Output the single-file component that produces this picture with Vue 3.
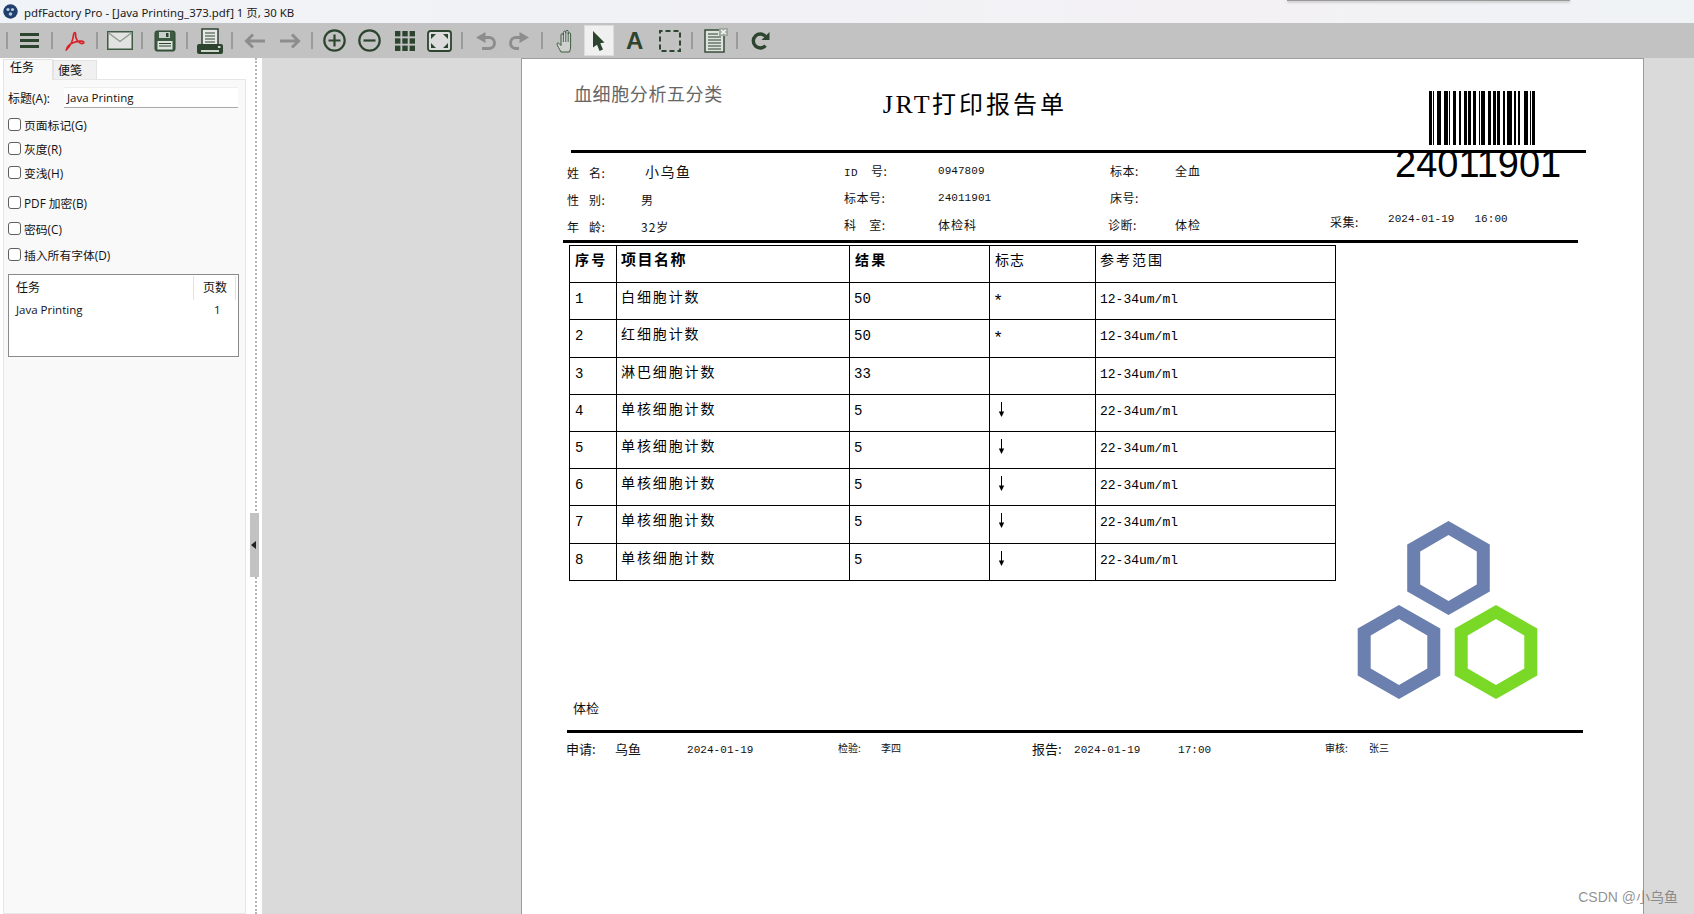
<script setup>
const rows = [
  { no: '1', name: '白细胞计数', val: '50', flag: '*', range: '12-34um/ml' },
  { no: '2', name: '红细胞计数', val: '50', flag: '*', range: '12-34um/ml' },
  { no: '3', name: '淋巴细胞计数', val: '33', flag: '', range: '12-34um/ml' },
  { no: '4', name: '单核细胞计数', val: '5', flag: 'down', range: '22-34um/ml' },
  { no: '5', name: '单核细胞计数', val: '5', flag: 'down', range: '22-34um/ml' },
  { no: '6', name: '单核细胞计数', val: '5', flag: 'down', range: '22-34um/ml' },
  { no: '7', name: '单核细胞计数', val: '5', flag: 'down', range: '22-34um/ml' },
  { no: '8', name: '单核细胞计数', val: '5', flag: 'down', range: '22-34um/ml' }
]
const options = [
  { label: '页面标记(G)', cls: '' },
  { label: '灰度(R)', cls: '' },
  { label: '变浅(H)', cls: '' },
  { label: 'PDF 加密(B)', cls: 'wide' },
  { label: '密码(C)', cls: 'mid' },
  { label: '插入所有字体(D)', cls: 'mid' }
]
const codes = ['211232', '311222', '222122', '221132', '222122', '214121', '2331112']
const module = 106 / 79
const bars = []
let pos = 0
codes.join('').split('').forEach((c, i) => {
  const w = Number(c) * module
  if (i % 2 === 0) bars.push({ x: pos, w })
  pos += w
})
const hex = (cx, cy) => {
  const p = (hw, hh) => {
    const q = hh / 2
    return `M${cx} ${cy - hh}L${cx + hw} ${cy - q}V${cy + q}L${cx} ${cy + hh}L${cx - hw} ${cy + q}V${cy - q}Z`
  }
  return p(41.3, 47) + p(28.3, 33)
}
const hexBlue = hex(41.5, 47) + hex(-8 + 0, 131)
</script>

<template>
  <div class="app">
    <header class="titlebar">
      <svg class="appicon" width="15" height="15" viewBox="0 0 15 15">
        <circle cx="7.5" cy="7.5" r="7.2" fill="#1f3f6e" />
        <circle cx="5" cy="5.5" r="1.6" fill="#b9c9de" />
        <circle cx="9.5" cy="5.5" r="1.6" fill="#b9c9de" />
        <circle cx="7.5" cy="10" r="1.8" fill="#b9c9de" />
      </svg>
      <span class="title-text">pdfFactory Pro - [Java Printing_373.pdf] 1 页, 30 KB</span>
      <div class="popup-edge"></div>
    </header>

    <nav class="toolbar">
      <i class="sep ml6"></i>
      <svg class="ml12" width="19" height="15" viewBox="0 0 19 15" fill="#2d452f"><rect width="19" height="3" /><rect y="6" width="19" height="3" /><rect y="12" width="19" height="3" /></svg>
      <i class="sep ml12"></i>
      <svg class="ml12" width="20" height="20" viewBox="0 0 20 20" fill="none" stroke="#d8222a" stroke-width="1.7"><path d="M1.5 18.5C5 15.5 8 9 8.6 3.5 8.9.8 10.8.8 10.6 3.5 10.3 7.5 13 11 15.5 12.2 17.5 13.1 19.2 12 18.6 10.8 18 9.6 13 9.8 8 11.8 5 13.2 2 15.5 1.5 18.5Z" /></svg>
      <i class="sep ml11"></i>
      <svg class="ml9" width="26" height="19" viewBox="0 0 26 19"><rect x=".75" y=".75" width="24.5" height="17.5" fill="#e2e2e2" stroke="#3f5a42" stroke-width="1.5" /><path d="M1 1.5L13 10.5 25 1.5" fill="none" stroke="#8a9a8b" stroke-width="1.3" /></svg>
      <i class="sep ml8"></i>
      <svg class="ml11" width="22" height="22" viewBox="0 0 22 22"><rect x="1" y="1" width="20" height="20" rx="2" fill="#3b5a3f" stroke="#2d452f" /><rect x="5" y="2" width="11" height="6" fill="#c9cfc9" /><rect x="12" y="3" width="2.5" height="4" fill="#2d452f" /><rect x="3.5" y="11" width="15" height="8.5" fill="#dfe3df" /><path d="M5 13.5H17M5 16H17" stroke="#2d452f" stroke-width="1" /></svg>
      <i class="sep ml10"></i>
      <svg class="ml9" width="26" height="26" viewBox="0 0 26 26"><rect x="5" y="1" width="16" height="17" fill="#e8e8e8" stroke="#2d452f" stroke-width="1.5" /><path d="M8 5H18M8 8H18M8 11H18M8 14H18" stroke="#2d452f" stroke-width="1.2" /><rect y="16" width="26" height="10" rx="2" fill="#2d452f" /><rect x="4" y="22" width="18" height="2" fill="#cfd4cf" /><rect x="21" y="18" width="2.5" height="2" fill="#cfd4cf" /></svg>
      <i class="sep ml8"></i>
      <svg class="ml11" width="22" height="16" viewBox="0 0 22 16" fill="none" stroke="#8d8d8d" stroke-width="3"><path d="M21 8H3M9 1.5L2.5 8 9 14.5" /></svg>
      <svg class="ml13" width="22" height="16" viewBox="0 0 22 16" fill="none" stroke="#8d8d8d" stroke-width="3"><path d="M1 8H19M13 1.5L19.5 8 13 14.5" /></svg>
      <i class="sep ml10"></i>
      <svg class="ml10" width="23" height="23" viewBox="0 0 23 23" fill="none" stroke="#2d452f" stroke-width="2.2"><circle cx="11.5" cy="11.5" r="10.2" /><path d="M5.5 11.5H17.5M11.5 5.5V17.5" /></svg>
      <svg class="ml12" width="23" height="23" viewBox="0 0 23 23" fill="none" stroke="#2d452f" stroke-width="2.2"><circle cx="11.5" cy="11.5" r="10.2" /><path d="M5.5 11.5H17.5" /></svg>
      <svg class="ml14" width="20" height="20" viewBox="0 0 20 20" fill="#2d452f"><rect width="5.4" height="5.4" /><rect x="7.3" width="5.4" height="5.4" /><rect x="14.6" width="5.4" height="5.4" /><rect y="7.3" width="5.4" height="5.4" /><rect x="7.3" y="7.3" width="5.4" height="5.4" /><rect x="14.6" y="7.3" width="5.4" height="5.4" /><rect y="14.6" width="5.4" height="5.4" /><rect x="7.3" y="14.6" width="5.4" height="5.4" /><rect x="14.6" y="14.6" width="5.4" height="5.4" /></svg>
      <svg class="ml12" width="25" height="22" viewBox="0 0 25 22"><rect x="1" y="1" width="23" height="20" rx="2.5" fill="#dcdcdc" stroke="#2d452f" stroke-width="1.8" /><path d="M4 4H9L4 9ZM21 4V9L16 4ZM4 18V13L9 18ZM21 18H16L21 13Z" fill="#2d452f" /></svg>
      <i class="sep ml9"></i>
      <svg class="ml13" width="20" height="18" viewBox="0 0 20 18" fill="none" stroke="#8d8d8d" stroke-width="3"><path d="M9 5.5H13A5 5 0 0 1 13 16.5H6" /><path d="M0 5.5L9.5 0V11Z" fill="#8d8d8d" stroke="none" /></svg>
      <svg class="ml13" width="20" height="18" viewBox="0 0 20 18" fill="none" stroke="#8d8d8d" stroke-width="3"><path d="M11 5.5H7A5 5 0 0 0 7 16.5H10" /><path d="M20 5.5L10.5 0V11Z" fill="#8d8d8d" stroke="none" /></svg>
      <i class="sep ml12"></i>
      <svg class="ml13" width="18" height="24" viewBox="0 0 18 24"><path d="M5 23C3.5 20 1 16.5 1 15 1 14 2.2 13.6 3 14.4L5 16.5V6A1.2 1.2 0 0 1 7.4 6V3.5A1.2 1.2 0 0 1 9.8 3.5V2.5A1.2 1.2 0 0 1 12.2 2.5V5A1.2 1.2 0 0 1 14.6 5V17C14.6 20 14 21.5 13.5 23Z" fill="#cfd1cf" stroke="#3f5a42" stroke-width="1" /><path d="M7.4 5V13M9.8 3V13M12.2 4V13" stroke="#3f5a42" stroke-width=".9" fill="none" /></svg>
      <div class="cursor-btn ml10">
        <svg width="12" height="20" viewBox="0 0 12 20" fill="#2d452f"><path d="M0 0L11.5 11.5 7.3 12.3 10 18.6 6.6 20 4 13.7 0 16.5Z" /></svg>
      </div>
      <span class="a-tool ml12">A</span>
      <svg class="ml16" width="22" height="22" viewBox="0 0 22 22" fill="none" stroke="#2d452f" stroke-width="2"><rect x="1" y="1" width="20" height="20" stroke-dasharray="5 3" stroke-dashoffset="2.5" /></svg>
      <i class="sep ml10"></i>
      <svg class="ml11" width="24" height="25" viewBox="0 0 24 25"><rect x="1" y="2" width="19" height="22" fill="#dfe2df" stroke="#2d452f" stroke-width="1.4" /><path d="M4 6H14M4 9H17M4 12H17M4 15H17M4 18H17M4 21H17" stroke="#2d452f" stroke-width="1.2" /><rect x="15" y="0" width="9" height="8" fill="#9fa89f" /><path d="M17.2 1.8L21.8 6.2M21.8 1.8L17.2 6.2" stroke="#f2f2f2" stroke-width="1.6" /></svg>
      <i class="sep ml8"></i>
      <svg class="ml12" width="20" height="18" viewBox="0 0 20 18" fill="none" stroke="#2d452f" stroke-width="3.4"><path d="M15.5 4.3A7 7 0 1 0 15.5 13.7" /><path d="M19.5 0V8H11.5Z" fill="#2d452f" stroke="none" /></svg>
    </nav>

    <div class="workspace">
      <aside class="side">
        <div class="panel">
          <div class="tabs">
            <span class="tab active">任务</span>
            <span class="tab">便笺</span>
          </div>
          <div class="tabbody">
            <div class="field">
              <label class="field-label">标题(A):</label>
              <span class="input">Java Printing</span>
            </div>
            <div class="options">
              <label v-for="o in options" :key="o.label" class="opt" :class="o.cls">
                <i class="check"></i><span>{{ o.label }}</span>
              </label>
            </div>
            <div class="list">
              <div class="list-head">
                <span class="c-task">任务</span>
                <span class="c-pages">页数</span>
              </div>
              <div class="list-row">
                <span class="c-task row-task">Java Printing</span>
                <span class="c-pages row-pages">1</span>
              </div>
            </div>
          </div>
        </div>
        <div class="splitter">
          <i class="dots"></i>
          <div class="handle"><i class="handle-arrow"></i></div>
        </div>
      </aside>

      <main class="viewer">
        <article class="page">
          <div class="head">
            <span class="sub">血细胞分析五分类</span>
            <span class="doc-title"><b class="jrt">JRT</b>打印报告单</span>
          </div>
          <div class="rule r1"></div>

          <div class="barcode">
            <svg width="106" height="54" viewBox="0 0 106 54" shape-rendering="crispEdges">
              <rect v-for="(b, i) in bars" :key="i" :x="b.x" y="0" :width="b.w" height="54" fill="#000" />
            </svg>
          </div>
          <div class="barcode-num">24011901</div>

          <div class="info">
            <span class="low lab">姓&nbsp;&nbsp;&nbsp;名:</span><span class="big">小乌鱼</span>
            <span class="lab"><span class="id">ID</span>&nbsp;&nbsp;&nbsp;&nbsp;号:</span><span class="mono">0947809</span>
            <span class="lab c3">标本:</span><span class="val">全血</span>
            <span></span><span></span>

            <span class="low lab">性&nbsp;&nbsp;&nbsp;别:</span><span class="low val">男</span>
            <span class="lab">标本号:</span><span class="mono">24011901</span>
            <span class="lab c3">床号:</span><span></span>
            <span></span><span></span>

            <span class="low lab">年&nbsp;&nbsp;&nbsp;龄:</span><span class="low val">32岁</span>
            <span class="lab">科&nbsp;&nbsp;&nbsp;&nbsp;室:</span><span class="val">体检科</span>
            <span class="lab">诊断:</span><span class="val">体检</span>
            <span class="lab stamp-lab">采集:</span><span class="mono stamp">2024-01-19&nbsp;&nbsp;&nbsp;16:00</span>
          </div>
          <div class="rule r2"></div>

          <table class="report">
            <colgroup>
              <col class="w1" /><col class="w2" /><col class="w3" /><col class="w4" /><col class="w5" />
            </colgroup>
            <thead>
              <tr>
                <th>序号</th><th class="wide-th">项目名称</th><th>结果</th><th class="thin">标志</th><th class="thin ref">参考范围</th>
              </tr>
            </thead>
            <tbody>
              <tr v-for="r in rows" :key="r.no">
                <td class="num">{{ r.no }}</td>
                <td class="name">{{ r.name }}</td>
                <td class="num val-cell">{{ r.val }}</td>
                <td class="flag">
                  <svg v-if="r.flag === 'down'" class="down" width="7" height="15" viewBox="0 0 7 15"><path d="M3.5 0V10" stroke="#000" stroke-width="1" /><path d="M.8 9.5H6.2L3.5 15Z" fill="#000" /></svg>
                  <span v-else class="star">{{ r.flag }}</span>
                </td>
                <td class="range">{{ r.range }}</td>
              </tr>
            </tbody>
          </table>

          <div class="note">体检</div>
          <div class="rule r3"></div>

          <div class="foot">
            <span>申请:</span><span class="big-foot">乌鱼</span><span class="mono lower">2024-01-19</span>
            <span class="tiny">检验:</span><span class="tiny">李四</span>
            <span>报告:</span><span class="mono lower">2024-01-19</span><span class="mono lower">17:00</span>
            <span class="tiny">审核:</span><span class="tiny">张三</span>
          </div>

          <svg class="logo" width="190" height="190" viewBox="-50 0 190 190">
            <path :d="hexBlue" fill="#6b80ae" fill-rule="evenodd" />
            <path :d="hex(89, 131)" fill="#7ad826" fill-rule="evenodd" />
          </svg>
        </article>
      </main>
    </div>

    <div class="watermark">CSDN @小乌鱼</div>
  </div>
</template>

<style>
html, body { margin: 0; overflow: hidden; }
</style>

<style scoped>
.app {
  width: 1694px;
  height: 914px;
  display: flex;
  flex-direction: column;
  overflow: hidden;
  position: relative;
  font-family: "Open Sans", "Noto Sans CJK SC", sans-serif;
  color: #111;
}
.titlebar {
  height: 23px;
  flex: none;
  display: flex;
  align-items: center;
  padding-left: 3px;
  box-sizing: border-box;
  background: linear-gradient(90deg, #f0f3f7, #f3f1f4 75%, #eff3f6);
  position: relative;
}
.appicon { flex: none; }
.title-text { margin-left: 6px; font-size: 11.4px; color: #1a1a1a; white-space: nowrap; font-family: "Noto Sans", "Noto Sans CJK SC", sans-serif; }
.popup-edge {
  position: absolute;
  left: 1287px;
  top: 0;
  width: 283px;
  height: 1px;
  background: #9a9a9a;
  box-shadow: 0 1px 3px rgba(0, 0, 0, .4);
}

.toolbar {
  height: 35px;
  flex: none;
  background: #c2c2c2;
  display: flex;
  align-items: center;
}
.toolbar svg { flex: none; display: block; }
.sep { width: 2px; height: 17px; background: #9b9b9b; flex: none; }
.ml6 { margin-left: 6px; }
.ml8 { margin-left: 8px; }
.ml9 { margin-left: 9px; }
.ml10 { margin-left: 10px; }
.ml11 { margin-left: 11px; }
.ml12 { margin-left: 12px; }
.ml13 { margin-left: 13px; }
.ml14 { margin-left: 14px; }
.ml16 { margin-left: 16px; }
.cursor-btn {
  width: 30px;
  height: 31px;
  box-sizing: border-box;
  background: #f0f0f0;
  border: 1px solid #dcdcdc;
  display: flex;
  align-items: center;
  justify-content: center;
  flex: none;
}
.a-tool {
  width: 17px;
  font: bold 24px/1 "Liberation Sans", sans-serif;
  color: #2d452f;
  text-align: center;
  flex: none;
}

.workspace { flex: 1; display: flex; min-height: 0; }
.side { width: 262px; flex: none; display: flex; background: #fff; }
.panel { width: 243px; margin-left: 3px; flex: none; display: flex; flex-direction: column; }
.tabs { height: 21px; display: flex; align-items: flex-end; flex: none; position: relative; }
.tab {
  width: 44px;
  height: 19px;
  box-sizing: border-box;
  background: #f0f0f0;
  border: 1px solid #e3e3e3;
  border-bottom: 0;
  font-size: 12px;
  line-height: 19px;
  padding-left: 4px;
  color: #111;
}
.tab.active {
  width: 50px;
  height: 21px;
  background: #f9f9f9;
  line-height: 16px;
  padding-left: 6px;
  margin-bottom: -1px;
  position: relative;
}
.tabbody {
  flex: 1;
  background: #f9f9f9;
  border: 1px solid #e6e6e6;
  padding: 7px 0 0 4px;
  box-sizing: border-box;
}
.field { display: flex; align-items: center; height: 21px; }
.field-label { width: 56px; font-size: 12px; flex: none; white-space: nowrap; }
.input {
  width: 174px;
  height: 21px;
  box-sizing: border-box;
  background: #fff;
  border-bottom: 1px solid #a8a8a8;
  border-top: 1px solid #eee;
  font-size: 11.5px;
  line-height: 19px;
  padding-left: 3px;
  color: #111;
}
.options { margin-top: 4px; display: flex; flex-direction: column; }
.opt { height: 24px; display: flex; align-items: center; font-size: 11.8px; color: #111; }
.opt.wide { margin-top: 6px; }
.opt.mid { margin-top: 2px; }
.check {
  width: 13px;
  height: 13px;
  box-sizing: border-box;
  border: 1px solid #5f5f5f;
  border-radius: 3px;
  background: #fff;
  margin-right: 3px;
  flex: none;
}
.list {
  width: 231px;
  height: 83px;
  margin-top: 8px;
  box-sizing: border-box;
  background: #fff;
  border: 1px solid #8a8a8a;
  font-size: 12px;
}
.list-head, .list-row { display: flex; }
.list-head { height: 25px; align-items: center; padding-top: 1px; box-sizing: border-box; }
.list-row { height: 18px; align-items: center; font-size: 11.5px; }
.c-task { width: 185px; padding-left: 7px; box-sizing: border-box; }
.row-task { padding-left: 7px; }
.c-pages { width: 42px; box-sizing: border-box; padding-left: 9px; }
.list-head .c-task { height: 24px; line-height: 24px; border-right: 1px solid #e2e2e2; }
.list-head .c-pages { height: 24px; line-height: 24px; border-right: 1px solid #e2e2e2; }
.row-pages { padding-left: 20px; }

.splitter { flex: 1; position: relative; display: flex; }
.dots { margin-left: 9px; width: 0; border-left: 2px dotted #b4b4b4; }
.handle {
  position: absolute;
  left: 4px;
  top: 455px;
  width: 9px;
  height: 64px;
  background: #c2c2c2;
  display: flex;
  align-items: center;
}
.handle-arrow {
  width: 0;
  height: 0;
  margin-left: 1px;
  border-top: 4px solid transparent;
  border-bottom: 4px solid transparent;
  border-right: 5px solid #222;
}

.viewer { flex: 1; min-width: 0; background: #dadada; padding-left: 259px; overflow: hidden; }
.page {
  width: 1123px;
  height: 100%;
  box-sizing: border-box;
  background: #fff;
  border-left: 1px solid #9c9c9c;
  border-right: 1px solid #9c9c9c;
  border-top: 1px solid #9c9c9c;
  position: relative;
  overflow: hidden;
  font-family: "Noto Sans CJK SC", "Liberation Serif", serif;
  color: #111;
}
.head { height: 91px; display: flex; align-items: flex-start; }
.sub { margin: 23px 0 0 52px; font-size: 18px; line-height: 22px; color: #666; letter-spacing: .6px; white-space: nowrap; }
.doc-title { margin: 29px 0 0 160px; font-size: 24px; line-height: 30px; letter-spacing: 3px; color: #000; white-space: nowrap; }
.jrt { font: normal 26px/30px "Liberation Serif", serif; letter-spacing: 2.5px; }
.rule { height: 3px; background: #000; }
.r1 { margin-left: 49px; width: 1015px; }
.r2 { margin-left: 41px; width: 1015px; margin-top: 2px; }
.r3 { margin-left: 45px; width: 1016px; margin-top: 13px; }

.barcode { position: absolute; left: 907px; top: 32px; }
.barcode svg { display: block; }
.barcode-num {
  position: absolute;
  left: 873px;
  top: 86px;
  font: 38px/38px "Liberation Sans", sans-serif;
  color: #000;
  white-space: nowrap;
}

.info {
  margin: 4px 0 0 45px;
  display: grid;
  grid-template-columns: 74px 203px 94px 170px 67px 155px 58px auto;
  grid-auto-rows: 27px;
  align-items: center;
  font-size: 12px;
}
.lab { letter-spacing: .5px; white-space: nowrap; }
.id { font: 11px "Liberation Mono", monospace; }
.low { padding-top: 4px; }
.big { font-size: 14px; letter-spacing: 1.5px; padding-left: 4px; }
.val { letter-spacing: 1px; white-space: nowrap; }
.c3 { padding-left: 2px; }
.mono { font: 11px "Liberation Mono", monospace; letter-spacing: .05px; white-space: nowrap; }
.stamp { padding-bottom: 12px; }
.stamp-lab { padding-bottom: 6px; }

.report {
  margin: 2px 0 0 47px;
  border-collapse: collapse;
  table-layout: fixed;
  width: 766px;
  color: #000;
}
.w1 { width: 47px; }
.w2 { width: 233px; }
.w3 { width: 140px; }
.w4 { width: 106px; }
.w5 { width: 240px; }
.report tr { height: 37.2px; }
.report th, .report td {
  border: 1px solid #000;
  padding: 5px 0 0 5px;
  box-sizing: border-box;
  vertical-align: top;
  text-align: left;
  line-height: 20px;
  font-size: 14px;
  font-weight: 400;
  white-space: nowrap;
}
.report th { font-weight: 700; padding-top: 3px; letter-spacing: 2.3px; }
.report th.wide-th { font-size: 15px; letter-spacing: 1.5px; padding-left: 4px; }
.report th.thin { font-weight: 400; letter-spacing: 1px; }
.report th.ref { letter-spacing: 2px; padding-left: 4px; }
.report td.num { font-family: "Liberation Mono", monospace; padding-top: 6px; }
.report td.val-cell { padding-left: 4px; }
.report td.name { letter-spacing: 1.9px; padding-top: 3px; padding-left: 4px; }
.report td.range { font-family: "Liberation Mono", monospace; font-size: 13px; padding-left: 4px; padding-top: 7px; }
.report td.flag { padding-left: 8px; padding-top: 7px; }
.report td.flag:has(svg) { padding-top: 5px; }
.star { font-family: "Liberation Mono", monospace; font-size: 17px; margin-left: -5px; }
.down { display: block; margin-top: 2px; }

.note { margin: 118px 0 0 51px; font-size: 13px; line-height: 18px; }

.foot {
  margin: 6px 0 0 44px;
  display: grid;
  grid-template-columns: 49px 72px 151px 43px 151px 42px 104px 147px 44px auto;
  align-items: center;
  font-size: 13px;
  height: 20px;
}
.foot .lower { padding-top: 2px; }
.big-foot { font-size: 13px; }
.foot .tiny { font-size: 10px; margin-top: -3px; }

.logo { position: absolute; left: 835px; top: 462px; }

.watermark {
  position: absolute;
  right: 16px;
  top: 888px;
  font: 14px/18px "Liberation Sans", "Noto Sans CJK SC", sans-serif;
  color: rgba(110, 110, 110, .75);
  white-space: nowrap;
}
</style>
